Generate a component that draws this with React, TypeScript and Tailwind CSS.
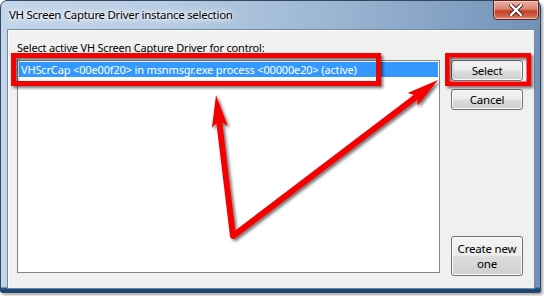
import React from "react";

const btn =
  "flex flex-col items-center justify-center text-center rounded-[3px] border border-[#707070] bg-[linear-gradient(180deg,#f4f4f4_0%,#ececec_48%,#dcdcdc_52%,#cfcfcf_100%)] shadow-[inset_0_0_0_1px_#fbfbfb] text-[11.5px] leading-[15px] tracking-[-0.2px] text-black";

const Annotations = () => (
  <svg className="absolute inset-0 pointer-events-none" width="544" height="296" viewBox="0 0 544 296">
    <defs>
      <filter id="shadow" x="-20%" y="-20%" width="140%" height="140%">
        <feDropShadow dx="2" dy="2" stdDeviation="1.5" floodColor="#000" floodOpacity="0.55" />
      </filter>
    </defs>
    <g filter="url(#shadow)">
      <rect x="13.5" y="55.5" width="365" height="28" fill="none" stroke="#f40000" strokeWidth="5" />
      <rect x="447.3" y="55.3" width="81.5" height="28.5" fill="none" stroke="#f40000" strokeWidth="4.5" />
      <polyline
        points="219.1,120.8 233,236 417.4,95.8"
        fill="none"
        stroke="#f40000"
        strokeWidth="6"
        strokeLinejoin="round"
        strokeLinecap="round"
      />
      <polygon points="216,95 227.7,125.8 219.1,120.8 211.9,127.8" fill="#f40000" />
      <polygon points="438,80 417.5,105.8 417.4,95.8 407.7,93.1" fill="#f40000" />
    </g>
  </svg>
);

export default function App() {
  return (
    <div className="relative w-[544px] h-[296px] bg-white overflow-hidden font-['Noto_Sans',sans-serif]">
      <div className="w-[541px] h-[293px] flex flex-col rounded-t-[7px] rounded-b-[2px] border border-[#33475e] shadow-[2px_2px_3px_rgba(0,0,0,0.35)] bg-[linear-gradient(0deg,#163f6c_0px,#24568a_4px,transparent_5px),linear-gradient(90deg,#c3d5ea_0%,#b8cde4_30%,#98b3d1_65%,#7191b8_100%)]">
        <div className="h-[28px] flex items-start justify-between pl-[8px]">
          <span className="mt-[6px] text-[11.5px] leading-[16px] tracking-[-0.3px] text-black [text-shadow:0_0_8px_#fff,0_0_6px_#fff,0_0_3px_#fff]">
            VH Screen Capture Driver instance selection
          </span>
          <div className="w-[46px] h-[20px] -mt-px mr-[1px] flex items-center justify-center rounded-b-[4px] border border-[#5a2720] bg-[linear-gradient(180deg,#eab1a5_0%,#d98472_45%,#c33e27_55%,#d1624a_85%,#e39a7f_100%)] shadow-[inset_0_0_0_1px_rgba(255,220,210,0.6)]">
            <svg width="14" height="12" viewBox="0 0 14 12">
              <path d="M2 1 L12 11 M12 1 L2 11" stroke="#3b1a16" strokeWidth="4.2" strokeLinecap="square" />
              <path d="M2 1 L12 11 M12 1 L2 11" stroke="#ffffff" strokeWidth="2.4" strokeLinecap="square" />
            </svg>
          </div>
        </div>
        <div className="flex-1 ml-[6px] mr-[5px] mb-[3px] flex border border-[#74889f] bg-[#f0f0f0] shadow-[inset_1px_1px_0_#ffffff]">
          <div className="flex flex-col pl-[9px] pt-[10px]">
            <span className="text-[11px] leading-[15px] tracking-[-0.2px] text-black">
              Select active VH Screen Capture Driver for control:
            </span>
            <div className="mt-[5px] w-[423px] h-[213px] border border-[#828790] bg-white p-px">
              <div className="h-[15px] bg-[#3399ff] pl-[2px] text-[11px] leading-[15px] tracking-[-0.15px] text-white">
                VHScrCap &lt;00e00f20&gt; in msnmsgr.exe process &lt;00000e20&gt; (active)
              </div>
            </div>
          </div>
          <div className="flex flex-col gap-[8px] ml-[11px] pt-[30px] pb-[12px]">
            <div className={`${btn} w-[72px] h-[21px]`}>Select</div>
            <div className={`${btn} w-[72px] h-[21px]`}>Cancel</div>
            <div className={`${btn} w-[72px] h-[40px] mt-auto`}>
              <span>Create new</span>
              <span>one</span>
            </div>
          </div>
        </div>
      </div>
      <Annotations />
    </div>
  );
}
